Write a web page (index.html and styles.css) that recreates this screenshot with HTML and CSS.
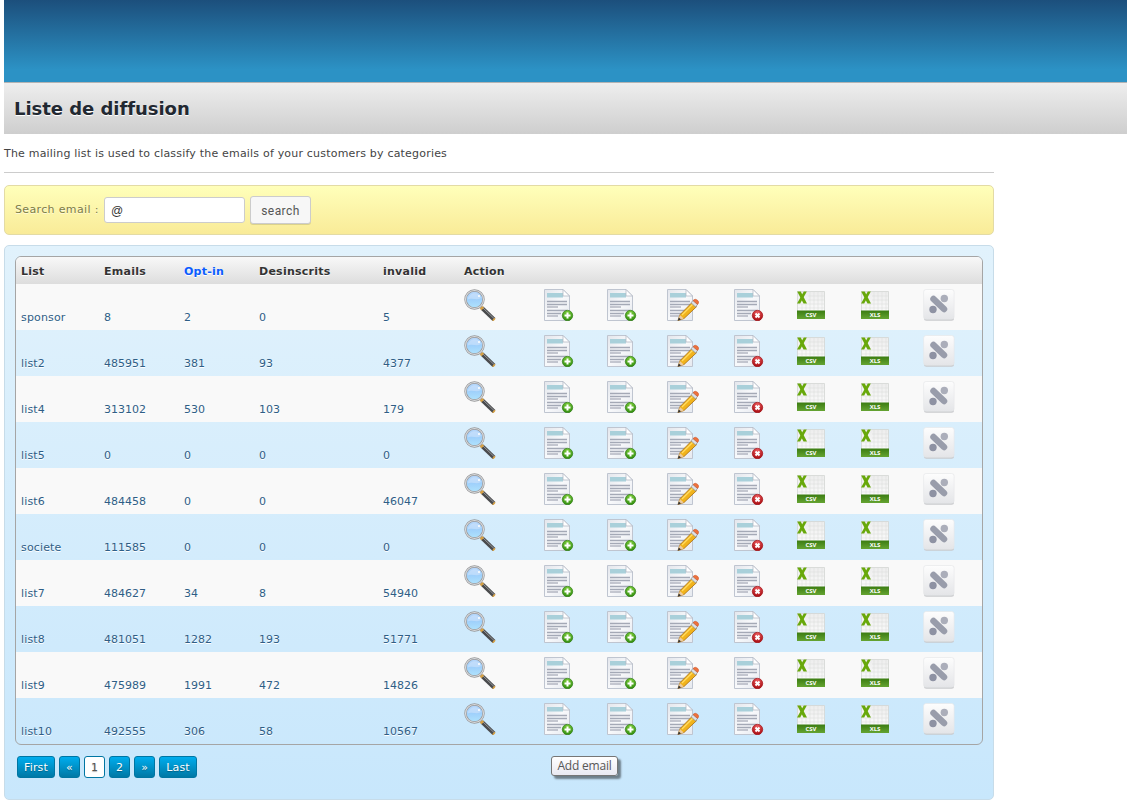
FILE: index.html
```html
<!DOCTYPE html>
<html lang="en">
<head>
<meta charset="utf-8">
<title>Liste de diffusion</title>
<link rel="stylesheet" href="styles.css">
</head>
<body>
<svg class="sprite" aria-hidden="true">
  <defs>
    <linearGradient id="paper" x1="0" y1="0" x2="1" y2="1"><stop offset="0" stop-color="#e3e6ec"/><stop offset=".5" stop-color="#f8f9fb"/><stop offset="1" stop-color="#e6e9ef"/></linearGradient>
    <linearGradient id="lens" x1="0" y1="0" x2="0" y2="1"><stop offset="0" stop-color="#b9d7fb"/><stop offset=".5" stop-color="#9fd0fb"/><stop offset="1" stop-color="#b0e4fd"/></linearGradient>
    <radialGradient id="green" cx=".5" cy=".25" r=".8"><stop offset="0" stop-color="#7fce3c"/><stop offset="1" stop-color="#2c8a0c"/></radialGradient>
    <radialGradient id="red" cx=".5" cy=".2" r=".8"><stop offset="0" stop-color="#e9575b"/><stop offset="1" stop-color="#a80d12"/></radialGradient>
    <linearGradient id="band" x1="0" y1="0" x2="0" y2="1"><stop offset="0" stop-color="#3b7c12"/><stop offset="1" stop-color="#65a432"/></linearGradient>
    <linearGradient id="sheet" x1="0" y1="0" x2="0" y2="1"><stop offset="0" stop-color="#ededed"/><stop offset="1" stop-color="#fff"/></linearGradient>
    <linearGradient id="key" x1="0" y1="0" x2="0" y2="1"><stop offset="0" stop-color="#fdfdfd"/><stop offset="1" stop-color="#e4e5e8"/></linearGradient>
  </defs>
  <symbol id="doc" viewBox="0 0 32 32">
    <path d="M.5.5H19L25.500 7V31.500H.5z" fill="url(#paper)" stroke="#bfc5d0"/>
    <path d="M3 4H19V8.500H3z" fill="#a9d0da"/>
    <path d="M19 .5V7H25.500z" fill="#fff" stroke="#b3b9c4" stroke-width=".8"/>
    <path d="M3 12.500H23M3 15.500H23M3 21.500H23M3 24.500H17" stroke="#a4a9b6" stroke-width="1.300"/>
    <path d="M3 18H14M3 27H14" stroke="#9196a5" stroke-width="1.200"/>
  </symbol>
  <symbol id="view" viewBox="0 0 32 32">
    <path d="M18 19L30 30.500" stroke="#4a4b4d" stroke-width="4"/>
    <path d="M18.500 18.500L30 29.500" stroke="#96989b" stroke-width="1"/>
    <path d="M16.800 18L18.800 20M29.300 30L30.500 31" stroke="#d6a044" stroke-width="3.500"/>
    <circle cx="10.500" cy="10.500" r="9" fill="url(#lens)" stroke="#969799" stroke-width="2.400"/>
    <circle cx="10.500" cy="10.500" r="9" fill="none" stroke="#d9dadc" stroke-width="1.100"/>
    <path d="M3.500 11C4.500 3 15 2 17 9C12 12 8 8 3.500 11z" fill="#d5e6fc" opacity=".5"/>
    <circle cx="15" cy="7" r="1" fill="#fff"/>
  </symbol>
  <symbol id="add" viewBox="0 0 32 32">
    <use href="#doc"/>
    <circle cx="23.500" cy="26.500" r="5.200" fill="url(#green)" stroke="#347e1a" stroke-width=".7"/>
    <path d="M23.500 23.500V29.500M20.500 26.500H26.500" stroke="#fff" stroke-width="2"/>
  </symbol>
  <symbol id="edit" viewBox="0 0 32 32">
    <use href="#doc"/>
    <path d="M11 31.500L13 25.700L25 13.500L29.500 17.700L17 29.500z" fill="#f1b31c" stroke="#a76c12" stroke-width=".8"/>
    <path d="M15 26L26 15" stroke="#ffdb62" stroke-width="1.300"/>
    <path d="M11 31.500L12.900 26L16.700 29.600z" fill="#edcba0"/>
    <path d="M10.700 31.800L11.800 28.600L14 30.500z" fill="#343434"/>
    <path d="M24 13.700L26 11.500L30.500 15.500L28.500 18z" fill="#dde1e6" stroke="#85898e" stroke-width=".7"/>
    <path d="M26 11.500Q28 9 30.500 11.200T30.500 15.500z" fill="#ee713c" stroke="#c65328" stroke-width=".5"/>
  </symbol>
  <symbol id="remove" viewBox="0 0 32 32">
    <use href="#doc"/>
    <circle cx="23.500" cy="26.500" r="5.200" fill="url(#red)" stroke="#a31419" stroke-width=".7"/>
    <path d="M21.500 24.500L25.500 28.500M25.500 24.500L21.500 28.500" stroke="#fff" stroke-width="2"/>
  </symbol>
  <symbol id="excel" viewBox="0 0 32 32">
    <path d="M1.500 2.500H28.500V29H1.500z" fill="url(#sheet)" stroke="#d3d5d3" stroke-width=".8"/>
    <path d="M12 7H28M12 11H28M2 15H28M2 19H28M6 15V21M10 15V21M14 3V21M18 3V21M22 3V21M26 3V21" stroke="#dddfdd" stroke-width=".6"/>
    <path d="M1 21.500H29V30H1z" fill="url(#band)"/>
    <path d="M1.200 2.500H4.700L11 14.500H7.500z" fill="#68a80b"/><path d="M7.800 2.500H10.800L4.200 14.500H1z" fill="#68a80b"/>
  </symbol>
  <symbol id="clean" viewBox="0 0 32 32">
    <rect x="1" y="1.700" width="30" height="30" rx="2.500" fill="#c9cacd"/>
    <rect x=".6" y=".5" width="30.500" height="29.800" rx="2.500" fill="url(#key)" stroke="#e4e5e8" stroke-width=".6"/>
    <path d="M10.500 10L21 20" stroke="#999dab" stroke-width="6.500" stroke-linecap="round"/>
    <circle cx="21.300" cy="9.500" r="3.700" fill="#abaeba"/><circle cx="10" cy="20.500" r="3.700" fill="#8e92a3"/>
  </symbol>
</svg>
<div class="page">
  <div class="banner"></div>
  <header class="title"><h1>Liste de diffusion</h1></header>
  <main class="content">
    <p class="intro">The mailing list is used to classify the emails of your customers by categories</p>
    <form class="search">
      <label class="search-label" for="email">Search email :</label>
      <input class="search-input" id="email" type="text" value="@">
      <button class="search-button" type="button">search</button>
    </form>
    <section class="panel">
      <div class="table" id="lists">
        <div class="row head">
          <span>List</span><span>Emails</span><span class="sorted">Opt-in</span><span>Desinscrits</span><span>invalid</span><span>Action</span>
        </div>
      </div>
      <div class="footer">
        <nav class="pager">
          <a>First</a><a>«</a><a class="current">1</a><a>2</a><a>»</a><a>Last</a>
        </nav>
        <span class="tip">Add email</span>
      </div>
    </section>
  </main>
</div>
<script src="rows.js"></script>
</body>
</html>
```
FILE: rows.js
```js
const lists = [
  ["sponsor", 8, 2, 0, 5],
  ["list2", 485951, 381, 93, 4377],
  ["list4", 313102, 530, 103, 179],
  ["list5", 0, 0, 0, 0],
  ["list6", 484458, 0, 0, 46047],
  ["societe", 111585, 0, 0, 0],
  ["list7", 484627, 34, 8, 54940],
  ["list8", 481051, 1282, 193, 51771],
  ["list9", 475989, 1991, 472, 14826],
  ["list10", 492555, 306, 58, 10567]
];
const icon = (name, label = "") =>
  `<svg class="icon" width="32" height="32" viewBox="0 0 32 32"><use href="#${name}"/>` +
  (label ? `<text class="format" x="15" y="27.800" text-anchor="middle">${label}</text>` : "") + `</svg>`;
const actions = icon("view") + icon("add") + icon("add") + icon("edit") + icon("remove") +
  icon("excel", "CSV") + icon("excel", "XLS") + icon("clean");
document.getElementById("lists").insertAdjacentHTML("beforeend", lists.map(values =>
  `<div class="row item">${values.map(v => `<span>${v}</span>`).join("")}${actions}</div>`
).join(""));
```
FILE: styles.css
```css
* { box-sizing: border-box; }
body {
  margin: 0;
  background: #fff;
  color: #444;
  font: 11px/15px Verdana, "DejaVu Sans", sans-serif;
  overflow: hidden;
}
.sprite { display: block; width: 0; height: 0; }
.page { padding-left: 4px; }
.banner { height: 82px; background: linear-gradient(#1c4f7c, #2c92c5 85%); }
.title {
  display: flex;
  align-items: center;
  height: 52px;
  padding: 0 10px;
  border-top: 1px solid #b3b3b3;
  background: linear-gradient(#eee, #cecece);
}
.title h1 { margin: 0; font-size: 18px; line-height: 22px; letter-spacing: -.04px; color: #222831; text-shadow: 0 1px 0 #fff; }
.content { width: 990px; }
.intro { margin: 0 0 12px; height: 39px; padding-top: 12px; border-bottom: 1px solid #ccc; letter-spacing: .195px; }
.search {
  display: flex;
  height: 50px;
  padding: 10px;
  border: 1px solid #e3dba5;
  border-radius: 5px;
  background: linear-gradient(#ffffba, #f9eb98);
}
.search-label { width: 89px; padding-top: 6px; color: #7c7c48; letter-spacing: .35px; text-shadow: 0 1px 0 rgba(255, 255, 255, .6); }
.search-input {
  width: 141px;
  height: 26px;
  margin: 1px 5px 0 0;
  padding: 2px 6px 0;
  border: 1px solid #ccc;
  border-radius: 3px;
  background: #fff;
  color: #333;
  font: 12px "Liberation Sans", Arial, sans-serif;
}
.search-button {
  width: 61px;
  height: 28px;
  padding: 1px 0 0;
  border: 1px solid #ccc;
  border-radius: 3px;
  background: #f7f7f7;
  box-shadow: 0 1px 0 rgba(0, 0, 0, .12);
  color: #555;
  font: 12px Roboto, sans-serif;
  letter-spacing: .45px;
}
.panel {
  height: 555px;
  margin-top: 10px;
  padding: 10px;
  border: 1px solid #c7dce9;
  border-radius: 5px;
  background: linear-gradient(#e1f2fc, #c8e7fc);
}
.table { border: 1px solid #a5a5a5; border-radius: 6px; overflow: hidden; }
.row {
  display: grid;
  grid-template-columns: 83px 80px 75px 124px 81px 80px 63px 60px 67px 62px 64px 63px 1fr;
  padding-left: 5px;
}
.head {
  height: 27px;
  padding-top: 7px;
  background: linear-gradient(#f8f8f8, #ddd);
  color: #333;
  font-weight: bold;
  letter-spacing: .25px;
  text-shadow: 0 1px 0 #fff;
}
.sorted { color: #0b5cff; }
.item { height: 46px; padding-top: 5px; color: #2f5e86; text-shadow: 0 1px 0 #fff; }
.item span { padding-top: 21px; }
.item span:first-child { letter-spacing: .15px; }
.item:nth-child(even) { background: #f9f9f9; }
.icon { display: block; }
.format { fill: #fff; font: bold 6px "Open Sans", sans-serif; text-shadow: none; }
.footer { display: flex; padding: 11px 0 0 2px; }
.pager { display: flex; gap: 4px; width: 534px; }
.pager a {
  min-width: 21px;
  height: 22px;
  padding: 3px 6px;
  border: 1px solid #0076a3;
  border-radius: 3px;
  background: linear-gradient(#00adee, #0078a5);
  color: #fff;
  letter-spacing: .15px;
  text-align: center;
  text-shadow: 0 1px 1px rgba(0, 0, 0, .3);
}
.pager .current { background: #fff; color: #555; }
.tip {
  width: 67px;
  height: 20px;
  border: 1px solid #767676;
  border-radius: 3px;
  background: linear-gradient(#fff, #e9e9f2);
  box-shadow: 3px 3px 2px rgba(0, 0, 0, .45);
  color: #575757;
  font: 12px/18px "Open Sans", sans-serif;
  letter-spacing: -.2px;
  text-align: center;
}
```
